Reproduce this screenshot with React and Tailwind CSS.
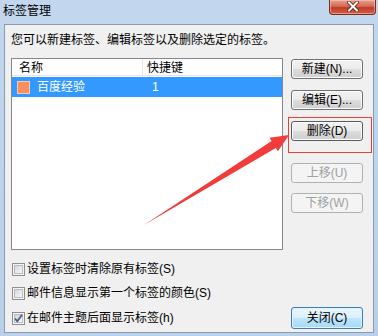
import React from "react";

const font = { fontFamily: '"Liberation Sans", "Noto Sans CJK SC", sans-serif' };

function Btn({ children, disabled, focus, className = "" }) {
  const base =
    "w-[72px] h-[20px] rounded-[3px] border flex items-center justify-center text-[12px] leading-none";
  if (disabled)
    return (
      <div className={`${base} border-[#adb2b5] bg-[#f4f4f4] text-[#a0a0a0] ${className}`}>
        {children}
      </div>
    );
  return (
    <div
      className={`${base} ${
        focus ? "border-[#5a5a5a]" : "border-[#707070]"
      } bg-[linear-gradient(to_bottom,#f2f2f2_0%,#ebebeb_50%,#dddddd_51%,#cfcfcf_100%)] text-black shadow-[inset_0_0_0_1px_#fcfcfc] ${className}`}
    >
      {children}
    </div>
  );
}

function Check({ checked, label }) {
  return (
    <div className="flex items-center gap-[2px] h-[16px]">
      <div className="relative ml-[1px] w-[13px] h-[13px] border border-[#8e8f8f] bg-[#f4f4f4]">
        <div className="absolute inset-[1px] border border-[#b9bcc1] bg-[linear-gradient(135deg,#d3d6da,#f8f8f8)]" />
        {checked && (
          <svg className="absolute inset-0" width="11" height="11" viewBox="0 0 11 11">
            <path d="M2 5.5 L4.3 8.3 L9 1.8" fill="none" stroke="#4a5f7f" strokeWidth="1.8" />
          </svg>
        )}
      </div>
      <span className="text-[12px] leading-[16px] text-black">{label}</span>
    </div>
  );
}

export default function App() {
  return (
    <div
      style={font}
      className="relative w-[378px] h-[336px] overflow-hidden flex flex-col bg-[linear-gradient(to_bottom,#c2d7ee,#b9d0ea)]"
    >
      {/* title bar */}
      <div className="h-[24px] flex items-start justify-between pl-[3px] pr-[2px]">
        <span className="text-[12px] leading-[22px] text-black">标签管理</span>
        <div className="relative w-[47px] h-[15px] rounded-b-[4px] border border-t-0 border-[#7b2c22] bg-[linear-gradient(to_bottom,#e6a190_0%,#d46a55_45%,#c13b26_55%,#d2604a_100%)] shadow-[inset_0_0_0_1px_rgba(255,210,200,0.5)]">
          <svg className="absolute left-[17px] top-[1px]" width="12" height="11" viewBox="0 0 12 11">
            <path d="M2 1.5 L10 9.5 M10 1.5 L2 9.5" stroke="#5a1a12" strokeWidth="3.6" strokeLinecap="square" />
            <path d="M2 1.5 L10 9.5 M10 1.5 L2 9.5" stroke="#ffffff" strokeWidth="2" strokeLinecap="square" />
          </svg>
        </div>
      </div>

      {/* client panel */}
      <div className="flex-1 mx-[4px] mb-[3px] border border-[#8b9aae] bg-[#f0f0f0] pl-[6px] pt-[7px]">
        <div className="text-[12px] leading-[16px] text-black">
          您可以新建标签、编辑标签以及删除选定的标签。
        </div>

        <div className="flex gap-[8px] mt-[10px]">
          {/* list view */}
          <div className="w-[272px] h-[192px] border border-[#828790] bg-white">
            <div className="flex h-[17px] border-b border-[#e5e5e5] text-[12px] leading-[18px] text-black">
              <div className="w-[131px] pl-[7px] border-r border-[#e5e5e5]">名称</div>
              <div className="pl-[4px]">快捷键</div>
            </div>
            <div className="mt-px h-[20px] bg-[#3399ff] flex items-center text-white text-[12px]">
              <div className="ml-[5px] w-[13px] h-[13px] border border-[#fcc9aa] bg-[#f7905e]" />
              <span className="ml-[7px] w-[115px]">百度经验</span>
              <span>1</span>
            </div>
          </div>

          {/* buttons */}
          <div className="flex flex-col mt-px">
            <Btn>新建(N)...</Btn>
            <Btn className="mt-[11px]">编辑(E)...</Btn>
            <Btn focus className="mt-[11px]">删除(D)</Btn>
            <Btn disabled className="mt-[22px]">上移(U)</Btn>
            <Btn disabled className="mt-[10px]">下移(W)</Btn>
          </div>
        </div>

        <div className="mt-[11px] w-[352px]">
          <Check label="设置标签时清除原有标签(S)" />
          <div className="mt-[8px]">
            <Check label="邮件信息显示第一个标签的颜色(S)" />
          </div>
          <div className="mt-[6px] flex items-center justify-between h-[22px]">
            <Check checked label="在邮件主题后面显示标签(h)" />
            <div className="w-[72px] h-[22px] rounded-[3px] border border-[#3c7fb1] bg-[linear-gradient(to_bottom,#eaf6fd_0%,#d9f0fc_50%,#bee6fd_51%,#a7d9f5_100%)] shadow-[inset_0_0_0_1px_#e0f4ff] flex items-center justify-center text-[12px] text-black">
              关闭(C)
            </div>
          </div>
        </div>
      </div>

      {/* annotation: red box */}
      <div className="absolute left-[288px] top-[117px] w-[84px] h-[36px] border border-[#e8403a] pointer-events-none" />

      {/* annotation: arrow */}
      <svg className="absolute inset-0 pointer-events-none" width="378" height="336" viewBox="0 0 378 336">
        <polygon
          points="144,225 271.6,141.1 269.5,137.7 289,135 277.9,151.3 275.8,147.9"
          fill="#f23b3b"
        />
      </svg>
    </div>
  );
}
